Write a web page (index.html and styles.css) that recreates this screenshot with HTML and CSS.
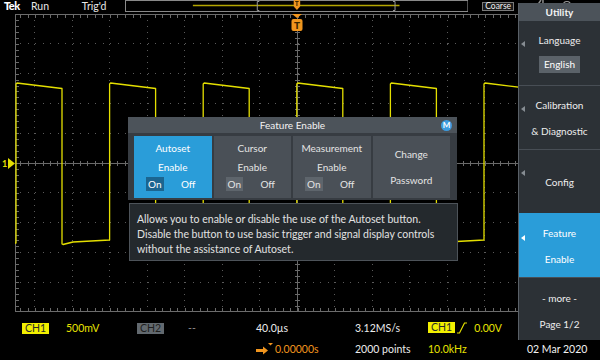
FILE: index.html
```html
<!DOCTYPE html>
<html lang="en">
<head>
    <meta charset="UTF-8">
    <title>Tek - Utility / Feature Enable</title>
    <link rel="stylesheet" href="styles.css">
</head>
<body>
<div class="scope">
    <!-- status line -->
    <div class="topbar">
        <span class="tek">Tek</span>
        <span class="run">Run</span>
        <span class="trig">Trig'd</span>
        <svg class="record" width="344" height="12" viewBox="125 0 344 12">
            <rect x="125.5" y="0.5" width="343" height="11" fill="none" stroke="#8a8a8a"/>
            <line x1="193" y1="5.5" x2="400" y2="5.5" stroke="#b3a500" stroke-width="1.4"/>
            <path d="M259.5 1.5 H257.5 V10.5 H259.5 M393.5 1.5 H395.5 V10.5 H393.5" fill="none" stroke="#9a9a9a"/>
            <rect x="294" y="0" width="6.5" height="7" rx="1" fill="#f0951e"/>
            <path d="M295.5 1.5 H299 M297.25 1.5 V6" stroke="#3a2600" stroke-width="1"/>
            <polygon points="294.5,7 300,7 297.25,10" fill="#f0951e"/>
        </svg>
        <span class="coarse">Coarse</span>
        <svg class="tray" width="85" height="12" viewBox="0 0 85 12">
            <path d="M22 6 L26 0 M28 6 L28 0" stroke="#8c8c8c" stroke-width="1.5"/>
            <circle cx="52" cy="5" r="3.5" fill="none" stroke="#9a9a9a" stroke-width="1.2"/>
        </svg>
    </div>

    <!-- graticule + trace -->
    <svg class="plot" width="600" height="302" viewBox="0 12 600 302">
        <g shape-rendering="crispEdges">
            <path d="M34.5 14 V312 M72.5 14 V312 M109.5 14 V312 M147.5 14 V312 M184.5 14 V312 M222.5 14 V312 M259.5 14 V312 M334.5 14 V312 M372.5 14 V312 M409.5 14 V312 M447.5 14 V312 M484.5 14 V312 M522.5 14 V312 M559.5 14 V312"
                  stroke="#5a5a5a" stroke-dasharray="1 4.96"/>
            <path d="M20 43.5 H579 M20 73.5 H579 M20 103.5 H579 M20 133.5 H579 M20 192.5 H579 M20 222.5 H579 M20 252.5 H579 M20 282.5 H579"
                  stroke="#5a5a5a" stroke-dasharray="1 6.5"/>
            <rect x="15.5" y="14.5" width="563" height="297" fill="none" stroke="#6c6c6c"/>
            <line x1="15" y1="163.5" x2="579" y2="163.5" stroke="#6a6a6a"/>
            <line x1="297.5" y1="14" x2="297.5" y2="312" stroke="#6a6a6a"/>
            <line x1="20" y1="163.5" x2="579" y2="163.5" stroke="#6a6a6a" stroke-width="5" stroke-dasharray="1 6.5"/>
            <line x1="297.5" y1="14" x2="297.5" y2="312" stroke="#6a6a6a" stroke-width="5" stroke-dasharray="1 4.96"/>
            <line x1="20" y1="16" x2="579" y2="16" stroke="#6a6a6a" stroke-width="4" stroke-dasharray="1 6.5"/>
            <line x1="20" y1="310" x2="579" y2="310" stroke="#6a6a6a" stroke-width="4" stroke-dasharray="1 6.5"/>
            <line x1="17" y1="14" x2="17" y2="312" stroke="#6a6a6a" stroke-width="4" stroke-dasharray="1 4.96"/>
        </g>
        <path fill="none" stroke="#e4df00" stroke-width="1.3" stroke-linejoin="round"
              d="M15,243 L16,243 L16,84 L17,83 L21,83.5 L62,88.5 L62,244 L63,244.5 L73,242 L109.6,240 L109.6,84 L110.6,83 L114.6,83.5 L155.6,88.5 L155.6,244 L156.6,244.5 L166.6,242 L203.2,240 L203.2,84 L204.2,83 L208.2,83.5 L249.2,88.5 L249.2,244 L250.2,244.5 L260.2,242 L296.8,240 L296.8,84 L297.8,83 L301.8,83.5 L342.8,88.5 L342.8,244 L343.8,244.5 L353.8,242 L390.4,240 L390.4,84 L391.4,83 L395.4,83.5 L436.4,88.5 L436.4,244 L437.4,244.5 L447.4,242 L484,240 L484,84 L485,83 L489,83.5 L530,88.5 L530,244 L531,244.5 L541,242 L577.6,240 L577.6,84 L579,83"/>
        <text x="2" y="167" class="chmark">1</text>
        <polygon points="8,158 15,163.5 8,169" fill="#e4df00"/>
        <polygon points="292,14 302,14 297,18" fill="#f0951e"/>
        <rect x="291.5" y="19" width="11" height="12" rx="2" fill="#f0951e"/>
        <text x="297" y="29" class="tmark">T</text>
    </svg>

    <!-- readouts -->
    <div class="readouts">
        <span><span class="chip ch1">CH1</span></span>
        <span class="yel">500mV</span>
        <span><span class="chip ch2">CH2</span></span>
        <span class="dim">--</span>
        <span>40.0µs</span>
        <span>3.12MS/s</span>
        <span class="trigread">
            <span class="chip ch1">CH1</span>
            <svg class="edge" width="10" height="12" viewBox="0 0 10 12">
                <path d="M0 11 H2.5 L7.5 1 H10" fill="none" stroke="#e4df00" stroke-width="1.2"/>
            </svg>
            <span class="yel">0.00V</span>
        </span>
        <span class="pos">
            <svg class="arrow" width="19" height="14" viewBox="0 0 19 14">
                <polygon points="12,1 17,1 14.5,3.5" fill="#f0951e"/>
                <path d="M0 8.5 H8" stroke="#f0951e" stroke-width="3"/>
                <polygon points="7,4.5 12,8.5 7,12.5" fill="#f0951e"/>
            </svg>0.00000s
        </span>
        <span>2000 points</span>
        <span class="yel">10.0kHz</span>
        <span class="date">02 Mar 2020</span>
    </div>

    <!-- side menu -->
    <div class="menu">
        <div class="menu-head">Utility</div>
        <div class="mitem">
            <i class="tri"></i>
            <div class="mtext stack"><span>Language</span><span class="mval">English</span></div>
        </div>
        <div class="mitem">
            <i class="tri"></i>
            <div class="mtext two">Calibration<br>&amp; Diagnostic</div>
        </div>
        <div class="mitem">
            <i class="tri"></i>
            <div class="mtext">Config</div>
        </div>
        <div class="mitem sel">
            <i class="tri"></i>
            <div class="mtext two">Feature<br>Enable</div>
        </div>
        <div class="mitem last">
            <i></i>
            <div class="mtext two">- more -<br>Page 1/2</div>
        </div>
    </div>

    <!-- feature enable dialog -->
    <div class="dialog">
        <div class="dlg-panel">
            <div class="dlg-head"><span class="dlg-title">Feature Enable</span><span class="mbadge">M</span></div>
            <div class="cards">
                <div class="card active">
                    <span>Autoset</span>
                    <span>Enable</span>
                    <div class="onoff"><span class="on">On</span><span>Off</span></div>
                </div>
                <div class="card">
                    <span>Cursor</span>
                    <span>Enable</span>
                    <div class="onoff"><span class="on">On</span><span>Off</span></div>
                </div>
                <div class="card">
                    <span>Measurement</span>
                    <span>Enable</span>
                    <div class="onoff"><span class="on">On</span><span>Off</span></div>
                </div>
                <div class="card twoline">
                    <span>Change</span>
                    <span>Password</span>
                </div>
            </div>
        </div>
        <div class="desc">
            Allows you to enable or disable the use of the Autoset button.<br>
            Disable the button to use basic trigger and signal display controls<br>
            without the assistance of Autoset.
        </div>
    </div>
</div>
</body>
</html>
```

FILE: styles.css
```css
* { box-sizing: border-box; }
html, body { margin: 0; padding: 0; background: #000; }
body { font-family: "Lato", "Noto Sans", sans-serif; font-size: 10px; color: #e6e6e6; }

.scope { position: relative; width: 600px; height: 360px; overflow: hidden; background: #000; }

/* status line */
.topbar { display: flex; align-items: center; height: 12px; font-size: 10.5px; line-height: 12px; color: #e8e8e8; }
.tek { width: 31px; padding-left: 4px; font-size: 11px; font-weight: 900; letter-spacing: -0.5px; color: #fff; }
.run { width: 51px; }
.trig { width: 43px; }
.record { display: block; }
.coarse {
    width: 32px;
    height: 9px;
    margin-left: 14px;
    border: 1px solid #7a7a7a;
    background: #1c1c1c;
    font-size: 8.5px;
    line-height: 7px;
    text-align: center;
    color: #f0f0f0;
}
.tray { display: block; margin-left: 1px; }

/* graticule */
.plot { display: block; }
.chmark { font-family: "Lato", sans-serif; font-size: 9px; font-weight: 700; fill: #e4df00; }
.tmark { font-family: "Lato", sans-serif; font-size: 10px; font-weight: 900; fill: #3a2600; text-anchor: middle; }

/* readouts */
.readouts {
    display: grid;
    grid-template-columns: 44px 71px 51px 68px 99px 73px 99px auto;
    grid-auto-rows: 21px;
    align-items: center;
    padding: 3px 0 0 22px;
    font-size: 10.5px;
    color: #ececec;
    white-space: nowrap;
}
.chip { display: inline-block; padding: 0 3px; line-height: 11px; height: 11px; color: #2a2a2a; }
.ch1 { background: #f2ef00; }
.ch2 { background: #62696f; color: #1e1e1e; }
.yel { color: #e8e300; }
.dim { color: #8c8c8c; }
.trigread { display: flex; align-items: center; }
.edge { display: block; margin-left: 2px; }
.trigread .yel { margin-left: 7px; }
.pos { grid-column: 5; display: flex; align-items: center; color: #f0951e; }
.arrow { display: block; }
.date { color: #f2f2f2; }

/* side menu */
.menu {
    position: absolute;
    left: 518px;
    top: 3px;
    width: 82px;
    height: 337px;
    display: flex;
    flex-direction: column;
    background: #2c3136;
    border-left: 1px solid #596067;
    color: #eeeeee;
}
.menu-head { height: 18px; line-height: 18px; text-align: center; font-weight: 700; background: #4c535a; color: #f4f4f4; }
.mitem {
    display: grid;
    grid-template-columns: 9px 1fr 9px;
    align-items: center;
    height: 64px;
    border-top: 1px solid #484e55;
}
.menu-head + .mitem { border-top: 0; }
.mitem.sel { background: #2a9dd9; border-top-color: #2a9dd9; color: #fff; }
.mitem.last { flex: 1; height: auto; padding-top: 3px; }
.tri {
    width: 0;
    height: 0;
    margin: 0 0 18px 2px;
    border-right: 4px solid #878d93;
    border-top: 3.5px solid transparent;
    border-bottom: 3.5px solid transparent;
}
.sel .tri { border-right-color: #fff; margin-bottom: 16px; }
.mtext { text-align: center; line-height: 14px; }
.mtext.two { line-height: 26px; }
.mtext.stack { display: flex; flex-direction: column; align-items: center; gap: 9px; }
.mval { padding: 0 5px; line-height: 17px; background: #5b6269; color: #fff; }

/* dialog */
.dialog { position: absolute; left: 128px; top: 117px; width: 329px; }
.dlg-panel { background: #373c42; }
.dlg-head {
    display: grid;
    grid-template-columns: 1fr auto 1fr;
    align-items: center;
    height: 16px;
    background: #4c535a;
    color: #f2f2f2;
}
.dlg-title { grid-column: 2; }
.mbadge {
    justify-self: end;
    width: 11px;
    height: 11px;
    margin-right: 5px;
    border-radius: 50%;
    background: #3b9be0;
    color: #fff;
    font-size: 8px;
    font-weight: 700;
    line-height: 11px;
    text-align: center;
}
.cards { display: grid; grid-template-columns: repeat(4, 1fr); gap: 2px; padding: 3px 7px 2px 6px; }
.card {
    display: flex;
    flex-direction: column;
    align-items: center;
    height: 62px;
    padding-top: 3px;
    line-height: 19px;
    background: #4a5057;
    color: #e4e4e4;
}
.card.active { background: #2a9dd9; color: #fff; }
.card.twoline { justify-content: center; padding-top: 0; line-height: 26px; }
.onoff { align-self: stretch; display: flex; justify-content: space-between; align-items: center; padding: 0 14px 0 12px; }
.onoff span { padding: 0 2px; line-height: 14px; }
.onoff .on { background: #5e656c; }
.active .onoff .on { background: #1b6590; }
.desc {
    width: 329px;
    height: 58px;
    margin: 3px 0 0 1px;
    padding: 8px 4px 0 7px;
    border: 1px solid #4d5359;
    background: #24292d;
    font-size: 10.5px;
    line-height: 15px;
    color: #e2e2e2;
    white-space: nowrap;
}
```
